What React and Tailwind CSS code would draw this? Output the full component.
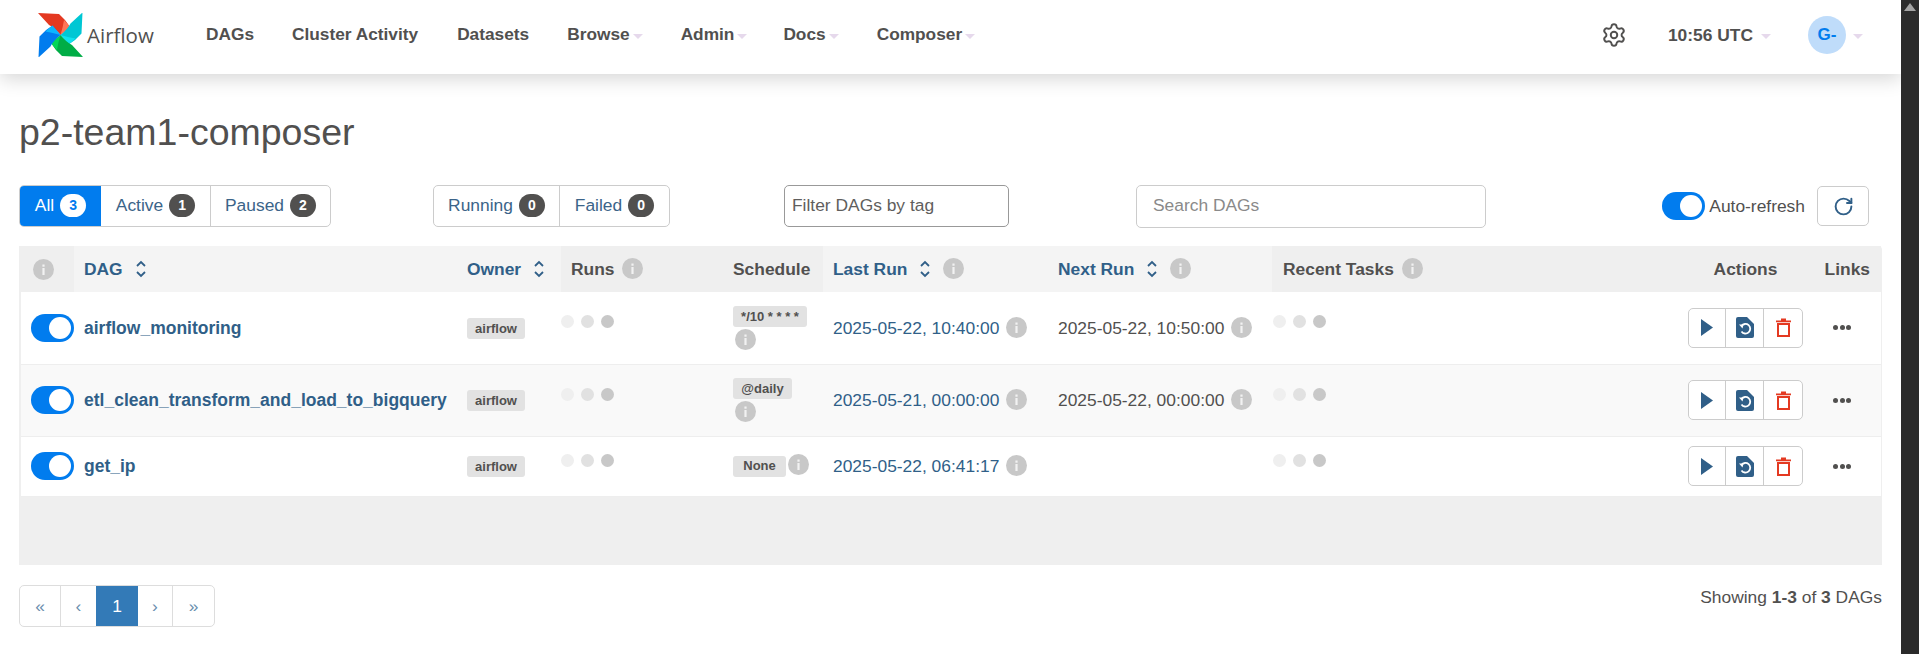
import React from "react";
import { RotateCw, Settings } from "lucide-react";

const Info = ({ className = "" }) => (
  <svg viewBox="0 0 21 21" className={`w-[21px] h-[21px] shrink-0 inline-block ${className}`}>
    <circle cx="10.5" cy="10.5" r="10.5" fill="#c8c8c8" />
    <rect x="9.4" y="9" width="2.2" height="7" fill="#f2f2f2" />
    <rect x="9.4" y="5.5" width="2.2" height="2.2" fill="#f2f2f2" />
  </svg>
);

const Sort = () => (
  <svg viewBox="0 0 10 18" className="w-[10px] h-[18px] ml-[13px] shrink-0" fill="none" stroke="#305f88" strokeWidth="1.8">
    <path d="M1 6l4-4 4 4M1 12l4 4 4-4" />
  </svg>
);

const Caret = ({ className = "" }) => (
  <span className={`inline-block w-0 h-0 border-x-[5px] border-x-transparent border-t-[5px] border-t-[#e6d9ec] ${className}`} />
);

const Toggle = () => (
  <span className="flex justify-end items-center w-[43px] h-[28px] rounded-full bg-[#017cee] p-[3px] shrink-0">
    <span className="w-[22px] h-[22px] rounded-full bg-white" />
  </span>
);

const Logo = () => {
  const blade = (deg, a, b) => (
    <g transform={`rotate(${deg} 22.5 22)`} key={deg}>
      <path d="M0 0 L21 1 Q28 7 32 14 L22.5 22 Q17 15 11 12 Z" fill={a} />
      <path d="M26 7 Q29 10 32 14 L22.5 22 Q25 14 26 7 Z" fill={b} />
    </g>
  );
  return (
    <svg viewBox="0 0 45 44" className="w-[45px] h-[44px] shrink-0">
      {blade(0, "#e43921", "#ff7557")}
      {blade(90, "#00c7d4", "#11e1ee")}
      {blade(180, "#00ad46", "#04d659")}
      {blade(270, "#017cee", "#0cb6ff")}
    </svg>
  );
};

const NavItem = ({ label, caret, className = "" }) => (
  <span className={`flex items-center font-bold text-[17.3px] text-[#51504f] ${className}`}>
    {label}
    {caret && <Caret className="ml-[3px] mt-[3px]" />}
  </span>
);

const Badge = ({ n, active }) => (
  <span
    className={`ml-[6px] w-[26px] h-[23px] rounded-full flex items-center justify-center text-[14px] font-bold ${
      active ? "bg-white text-[#017cee]" : "bg-[#51504f] text-white"
    }`}
  >
    {n}
  </span>
);

const Seg = ({ label, n, active, className = "" }) => (
  <span
    className={`flex items-center justify-center h-full pb-[1px] text-[17.4px] ${
      active ? "bg-[#017cee] text-white" : "text-[#3b6489]"
    } ${className}`}
  >
    {label}
    <Badge n={n} active={active} />
  </span>
);

const Dots = ({ className = "" }) => (
  <div className={`flex gap-[7px] ${className}`}>
    <span className="w-[13px] h-[13px] rounded-full bg-[#efefef]" />
    <span className="w-[13px] h-[13px] rounded-full bg-[#e1e1e1]" />
    <span className="w-[13px] h-[13px] rounded-full bg-[#c8c8c8]" />
  </div>
);

const Tag = ({ children, className = "" }) => (
  <span className={`inline-flex items-center h-[21px] rounded-[3px] bg-[#e2e2e2] text-[#51504f] font-bold text-[13px] ${className}`}>
    {children}
  </span>
);

const Actions = () => (
  <div className="mx-auto flex w-[115px] h-[40px] rounded-[5px] border border-[#cccccc] bg-white">
    <span className="w-[37px] flex items-center justify-center border-r border-[#cccccc]">
      <svg viewBox="0 0 12 17" className="w-[12px] h-[17px]"><path d="M0 0L12 8.5L0 17Z" fill="#305f88" /></svg>
    </span>
    <span className="w-[38px] flex items-center justify-center border-r border-[#cccccc]">
      <svg viewBox="0 0 18 21" className="w-[18px] h-[21px]">
        <path d="M2 0H11L18 7V19Q18 21 16 21H2Q0 21 0 19V2Q0 0 2 0Z" fill="#305f88" />
        <path d="M5.5 9A4.8 4.8 0 1 1 5.5 14.5" fill="none" stroke="#fff" strokeWidth="1.8" />
        <path d="M3 7.5L7.5 7.5L6.5 11.5Z" fill="#fff" />
      </svg>
    </span>
    <span className="flex-1 flex items-center justify-center">
      <svg viewBox="0 0 15 19" className="w-[15px] h-[19px]">
        <path d="M0 2.5H15V4.2H0ZM5 0.5H10V2.5H5Z" fill="#e43921" />
        <path d="M2 6H13V18H2Z" fill="none" stroke="#e43921" strokeWidth="2" />
      </svg>
    </span>
  </div>
);

const More = () => (
  <div className="flex justify-center gap-[1.5px] pr-[10px]">
    <span className="w-[5px] h-[5px] rounded-full bg-[#51504f]" />
    <span className="w-[5px] h-[5px] rounded-full bg-[#51504f]" />
    <span className="w-[5px] h-[5px] rounded-full bg-[#51504f]" />
  </div>
);

const Th = ({ className = "", children }) => (
  <th className={`p-0 h-[46px] font-bold text-[17.4px] text-left align-middle ${className}`}>
    <div className="flex items-center">{children}</div>
  </th>
);

const rows = [
  { name: "airflow_monitoring", h: "h-[72px]", bg: "bg-white", sched: "*/10 * * * *", schedW: "w-[74px] text-[12px] justify-center tracking-normal", stack: true, last: "2025-05-22, 10:40:00", next: "2025-05-22, 10:50:00" },
  { name: "etl_clean_transform_and_load_to_bigquery", h: "h-[72px]", bg: "bg-[#f9f9f9]", sched: "@daily", schedW: "w-[59px] justify-center", stack: true, last: "2025-05-21, 00:00:00", next: "2025-05-22, 00:00:00" },
  { name: "get_ip", h: "h-[60px]", bg: "bg-white", sched: "None", schedW: "w-[53px] justify-center", stack: false, last: "2025-05-22, 06:41:17", next: null },
];

const Seq = ["«", "‹", "1", "›", "»"];
const seqW = ["w-[41px]", "w-[35px]", "w-[42px]", "w-[35px]", "w-[41px]"];

export default function App() {
  return (
    <div className="flex h-[654px] overflow-hidden bg-white font-['Liberation_Sans',Arial,sans-serif] text-[#51504f]">
      <div className="flex-1 min-w-0">
        <nav className="h-[74px] pb-[4px] flex items-center bg-white shadow-[0_5px_18px_rgba(0,0,0,0.16)]">
          <div className="flex items-center ml-[38px] w-[168px] shrink-0">
            <Logo />
            <span className="ml-[4px] mt-[1px] font-['Open_Sans',sans-serif] text-[20.5px] text-[#51504f]">Airflow</span>
          </div>
          <NavItem label="DAGs" />
          <NavItem label="Cluster Activity" className="ml-[38px]" />
          <NavItem label="Datasets" className="ml-[39px]" />
          <NavItem label="Browse" caret className="ml-[38px]" />
          <NavItem label="Admin" caret className="ml-[38px]" />
          <NavItem label="Docs" caret className="ml-[36px]" />
          <NavItem label="Composer" caret className="ml-[38px]" />
          <div className="ml-auto flex items-center">
            <Settings size={26} color="#51504f" strokeWidth={1.8} />
            <span className="ml-[41px] font-bold text-[17.4px] text-[#51504f]">10:56 UTC</span>
            <Caret className="ml-[8px] mt-[3px]" />
            <span className="ml-[37px] w-[38px] h-[38px] rounded-full bg-[#bfdcfa] text-[#017cee] font-bold text-[17px] flex items-center justify-center">G-</span>
            <Caret className="ml-[7px] mt-[3px] mr-[38px]" />
          </div>
        </nav>

        <main className="px-[19px]">
          <h1 className="pt-[37px] h-[111px] text-[37.5px] leading-[42px] font-normal text-[#51504f]">p2-team1-composer</h1>

          <div className="flex items-center h-[42px]">
            <div className="flex w-[312px] h-[42px] rounded-[5px] border border-[#cccccc] overflow-hidden shrink-0">
              <Seg label="All" n="3" active className="w-[81px]" />
              <Seg label="Active" n="1" className="w-[110px] border-r border-[#cccccc]" />
              <Seg label="Paused" n="2" className="flex-1" />
            </div>
            <div className="ml-[102px] flex w-[237px] h-[42px] rounded-[5px] border border-[#cccccc] overflow-hidden shrink-0">
              <Seg label="Running" n="0" className="w-[126px] border-r border-[#cccccc]" />
              <Seg label="Failed" n="0" className="flex-1" />
            </div>
            <input
              readOnly
              placeholder="Filter DAGs by tag"
              className="ml-[114px] w-[225px] h-[42px] pb-[2px] rounded-[5px] border border-[#999999] px-[7px] text-[17.4px] outline-none shrink-0 placeholder:text-[#5f5e5d]"
            />
            <input
              readOnly
              placeholder="Search DAGs"
              className="ml-[127px] w-[350px] h-[43px] pb-[2px] rounded-[5px] border border-[#cccccc] px-[16px] text-[17.4px] outline-none shrink-0 placeholder:text-[#8a8a8a]"
            />
            <div className="ml-auto mr-[13px] flex items-center">
              <Toggle />
              <span className="ml-[4px] text-[17.4px] text-[#51504f]">Auto-refresh</span>
              <span className="ml-[12px] w-[52px] h-[40px] rounded-[5px] border border-[#cccccc] flex items-center justify-center">
                <RotateCw size={21} color="#305f88" strokeWidth={2.2} />
              </span>
            </div>
          </div>

          <div className="mt-[19px] h-[319px] bg-[#efefef] border-x-2 border-[#efefef] rounded-tr-[4px]">
            <table className="w-full table-fixed border-collapse">
              <colgroup>
                <col className="w-[53px]" />
                <col className="w-[383px]" />
                <col className="w-[104px]" />
                <col className="w-[162px]" />
                <col className="w-[100px]" />
                <col className="w-[225px]" />
                <col className="w-[224px]" />
                <col className="w-[406px]" />
                <col className="w-[135px]" />
                <col className="w-[68px]" />
              </colgroup>
              <thead>
                <tr>
                  <Th className="bg-[#efefef] pl-[12px]"><Info /></Th>
                  <Th className="bg-[#f4f4f4] pl-[10px] text-[#305f88]">DAG<Sort /></Th>
                  <Th className="bg-[#f4f4f4] pl-[10px] text-[#305f88]">Owner<Sort /></Th>
                  <Th className="bg-[#efefef] pl-[10px]">Runs<Info className="ml-[8px]" /></Th>
                  <Th className="bg-[#efefef] pl-[10px]">Schedule</Th>
                  <Th className="bg-[#f4f4f4] pl-[10px] text-[#305f88]">Last Run<Sort /><Info className="ml-[13px]" /></Th>
                  <Th className="bg-[#f4f4f4] pl-[10px] text-[#305f88]">Next Run<Sort /><Info className="ml-[13px]" /></Th>
                  <Th className="bg-[#efefef] pl-[11px]">Recent Tasks<Info className="ml-[8px]" /></Th>
                  <Th className="bg-[#efefef]"><span className="w-full text-center">Actions</span></Th>
                  <Th className="bg-[#efefef]"><span className="w-full text-right pr-[11px]">Links</span></Th>
                </tr>
              </thead>
              <tbody>
                {rows.map((r) => (
                  <tr key={r.name} className={`${r.h} ${r.bg} border-b border-[#eeeeee]`}>
                    <td className="p-0 pl-[10px] align-middle"><Toggle /></td>
                    <td className="p-0 pl-[10px] align-middle font-bold text-[17.5px] text-[#305f88] whitespace-nowrap">{r.name}</td>
                    <td className="p-0 pl-[10px] align-middle"><Tag className="w-[58px] justify-center">airflow</Tag></td>
                    <td className="p-0 align-top"><Dots className={r.h === "h-[60px]" ? "mt-[17px]" : "mt-[23px]"} /></td>
                    <td className="p-0 pl-[10px] align-middle">
                      <div className={r.stack ? "flex flex-col items-start gap-[2px]" : "flex items-center gap-[2px]"}>
                        <Tag className={r.schedW}>{r.sched}</Tag>
                        <Info className={r.stack ? "ml-[2px]" : "-mt-[3px]"} />
                      </div>
                    </td>
                    <td className="p-0 pl-[10px] align-middle text-[17.4px] text-[#305f88]">
                      <div className="flex items-center gap-[7px]">{r.last}<Info /></div>
                    </td>
                    <td className="p-0 pl-[10px] align-middle text-[17.4px] text-[#51504f]">
                      {r.next && <div className="flex items-center gap-[7px]">{r.next}<Info /></div>}
                    </td>
                    <td className="p-0 pl-[1px] align-top"><Dots className={r.h === "h-[60px]" ? "mt-[17px]" : "mt-[23px]"} /></td>
                    <td className="p-0 align-middle"><Actions /></td>
                    <td className="p-0 align-middle"><More /></td>
                  </tr>
                ))}
              </tbody>
            </table>
          </div>

          <div className="mt-[20px] flex items-start justify-between">
            <div className="flex h-[42px] rounded-[5px] border border-[#dddddd] overflow-hidden">
              {Seq.map((s, i) => (
                <span
                  key={i}
                  className={`${seqW[i]} flex items-center justify-center text-[17.4px] ${
                    s === "1" ? "bg-[#337ab7] text-white" : "text-[#6a8eae]"
                  } ${i === 0 || i === 3 ? "border-r border-[#dddddd]" : ""}`}
                >
                  {s}
                </span>
              ))}
            </div>
            <span className="text-[17.4px] leading-[24px] text-[#51504f]">
              Showing <b>1-3</b> of <b>3</b> DAGs
            </span>
          </div>
        </main>
      </div>

      <aside className="w-[18px] shrink-0 bg-[#2b2b2b] flex justify-center pt-[3px]">
        <span className="w-0 h-0 border-x-[6px] border-x-transparent border-b-[8px] border-b-[#a3a3a3]" />
      </aside>
    </div>
  );
}
